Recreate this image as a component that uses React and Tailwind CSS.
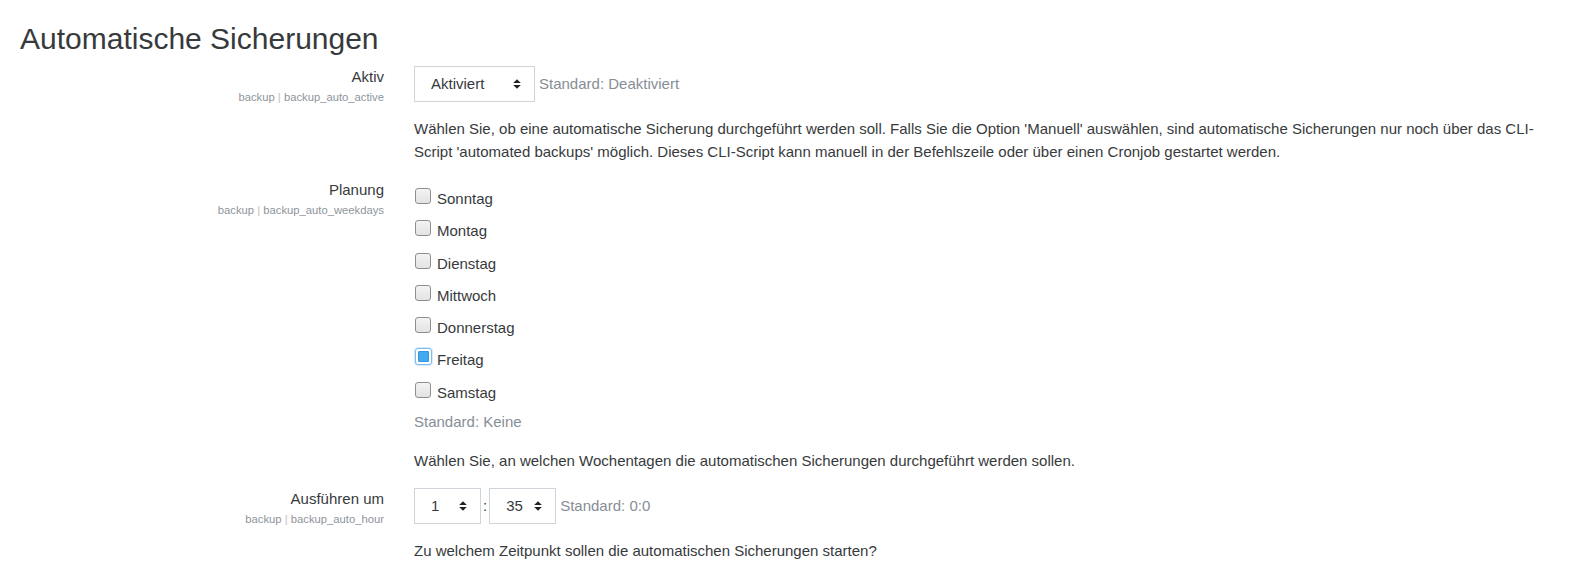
import React from "react";

const days = [
  { name: "Sonntag", checked: false },
  { name: "Montag", checked: false },
  { name: "Dienstag", checked: false },
  { name: "Mittwoch", checked: false },
  { name: "Donnerstag", checked: false },
  { name: "Freitag", checked: true },
  { name: "Samstag", checked: false },
];

function Arrows() {
  return (
    <svg width="8" height="10" viewBox="0 0 8 10" className="shrink-0">
      <path d="M4 0.3 L7.8 4.1 H0.2 Z" fill="#222" />
      <path d="M0.2 5.9 H7.8 L4 9.7 Z" fill="#222" />
    </svg>
  );
}

function Select({ value, width }) {
  return (
    <div
      className={`flex h-[36px] ${width} items-center justify-between border border-[#ced4da] bg-white pl-[16px] pr-[13px] text-[15px] text-[#373a3c]`}
    >
      <span>{value}</span>
      <Arrows />
    </div>
  );
}

function Checkbox({ checked }) {
  if (checked) {
    return (
      <span className="ml-[1px] mr-[5px] mt-[-1px] flex h-[17px] w-[17px] shrink-0 rounded-[3px] border border-[#7cbcef] bg-white p-[2px] shadow-[0_0_0_1px_#d6ebfb]">
        <span className="block h-full w-full rounded-[1px] border border-[#3296e2] bg-[#44aaf0]" />
      </span>
    );
  }
  return (
    <span className="ml-[1px] mr-[6px] block h-[16px] w-[16px] shrink-0 rounded-[3px] border border-[#8f8f8f] bg-gradient-to-b from-[#f3f3f3] to-[#e3e3e3]" />
  );
}

function Row({ label, shortname, children }) {
  return (
    <div className="mb-[16px] flex">
      <div className="w-[364px] shrink-0 text-right">
        <div className="text-[15px] leading-[22.5px] text-[#373a3c]">{label}</div>
        <div className="text-[11.25px] leading-[16.875px] text-[#8e959b]">
          backup <span className="text-[#bfbfbf]">|</span> {shortname}
        </div>
      </div>
      <div className="ml-[30px] flex-1">{children}</div>
    </div>
  );
}

export default function App() {
  return (
    <div className="min-h-[567px] bg-white pl-[20px] pr-[25px] pt-[21px] font-['Liberation_Sans',Arial,sans-serif] text-[15px] leading-[22.5px] text-[#373a3c]">
      <h2 className="mb-[9px] text-[30px] font-normal leading-[36px] text-[#373a3c]">
        Automatische Sicherungen
      </h2>

      <Row label="Aktiv" shortname="backup_auto_active">
        <div className="flex h-[36px] items-center">
          <Select value="Aktiviert" width="w-[121px]" />
          <span className="ml-[4px] text-[#868e96]">Standard: Deaktiviert</span>
        </div>
        <p className="mt-[16px]">
          Wählen Sie, ob eine automatische Sicherung durchgeführt werden soll. Falls Sie die Option 'Manuell'
          auswählen, sind automatische Sicherungen nur noch über das CLI-Script 'automated backups' möglich. Dieses
          CLI-Script kann manuell in der Befehlszeile oder über einen Cronjob gestartet werden.
        </p>
      </Row>

      <Row label="Planung" shortname="backup_auto_weekdays">
        <ul className="flex flex-col gap-[9.78px] pt-[9px]">
          {days.map((d) => (
            <li key={d.name} className="flex h-[22.5px] items-start">
              <Checkbox checked={d.checked} />
              <span>{d.name}</span>
            </li>
          ))}
        </ul>
        <div className="mt-[7.3px] text-[#868e96]">Standard: Keine</div>
        <p className="mt-[16px]">
          Wählen Sie, an welchen Wochentagen die automatischen Sicherungen durchgeführt werden sollen.
        </p>
      </Row>

      <Row label="Ausführen um" shortname="backup_auto_hour">
        <div className="flex h-[36px] items-center">
          <Select value="1" width="w-[67px]" />
          <span className="mx-[2px]">:</span>
          <Select value="35" width="w-[67px]" />
          <span className="ml-[4px] text-[#868e96]">Standard: 0:0</span>
        </div>
        <p className="mt-[16px]">Zu welchem Zeitpunkt sollen die automatischen Sicherungen starten?</p>
      </Row>
    </div>
  );
}
